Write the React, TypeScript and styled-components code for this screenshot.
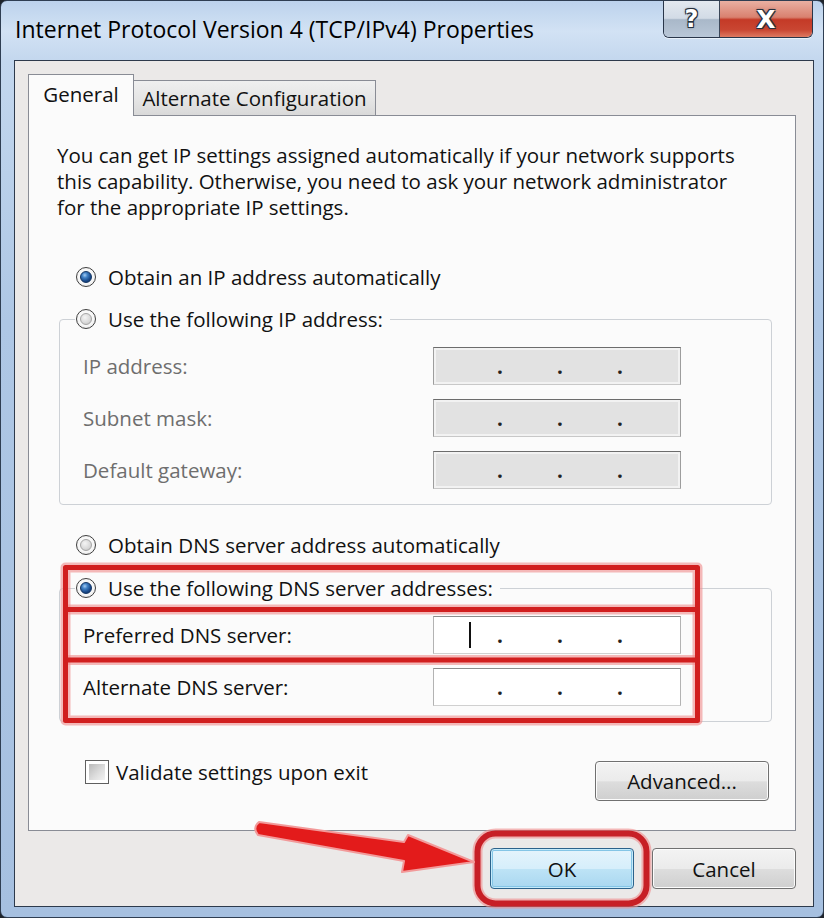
import React from "react";
import styled, { createGlobalStyle } from "styled-components";

const GlobalStyle = createGlobalStyle`
  html, body { margin: 0; padding: 0; background: #1e232a; }
  body { font-family: "Open Sans", "Noto Sans", sans-serif; }
  *, *::before, *::after { box-sizing: border-box; }
`;

const Window = styled.div`
  position: relative;
  width: 824px;
  height: 918px;
  border: 1px solid #2f3e52;
  border-radius: 7px;
  background: linear-gradient(180deg, #bcd2ec 0px, #d2e2f4 30px, #c3d7ee 60px, #aec7e5 320px, #a6c0e0 100%);
  display: flex;
  flex-direction: column;
  overflow: hidden;
  font-family: "Open Sans", "Noto Sans", sans-serif;
  color: #111;
`;

const TitleBar = styled.div`
  height: 59px;
  flex: none;
  display: flex;
  align-items: flex-start;
  justify-content: space-between;
  padding: 0 10px 0 14px;
`;

const TitleText = styled.div`
  margin-top: 13px;
  font-size: 23px;
  line-height: 30px;
  color: #000;
  white-space: nowrap;
`;

const CaptionButtons = styled.div`
  display: flex;
  height: 37px;
  border: 1px solid #29364a;
  border-top: none;
  border-radius: 0 0 6px 6px;
  overflow: hidden;
  box-shadow: 0 1px 0 rgba(255, 255, 255, 0.55);
`;

const CaptionButton = styled.div<{ $kind: "help" | "close" }>`
  display: flex;
  align-items: center;
  justify-content: center;
  width: ${(p) => (p.$kind === "help" ? 55 : 93)}px;
  border-left: ${(p) => (p.$kind === "close" ? "1px solid #3a4658" : "none")};
  background: ${(p) =>
    p.$kind === "help"
      ? "linear-gradient(180deg, #e3e9f0 0%, #d2dbe6 48%, #a9b8c9 52%, #b9c7d7 100%)"
      : "linear-gradient(180deg, #e9b0a2 0%, #d9816f 45%, #c43a27 52%, #c94632 80%, #de7a62 100%)"};
  font-family: "DejaVu Sans", sans-serif;
  font-weight: 700;
  font-size: ${(p) => (p.$kind === "help" ? 24 : 25)}px;
  line-height: 1;
  color: #fff;
  text-shadow: 1px 1px 0 #26303d, -1px -1px 0 #26303d, 1px -1px 0 #26303d,
    -1px 1px 0 #26303d, 0 0 3px #26303d;
`;

const ClientArea = styled.div`
  flex: 1;
  margin: 0 9px 10px 13px;
  border: 1px solid #2d3a4c;
  background: #ebe9e8;
  display: flex;
  flex-direction: column;
  padding: 13px 17px 0 13px;
`;

const TabStrip = styled.div`
  display: flex;
  align-items: flex-end;
  height: 42px;
  margin-bottom: -1px;
  position: relative;
  z-index: 1;
`;

const Tab = styled.div<{ $active?: boolean }>`
  display: flex;
  align-items: center;
  justify-content: center;
  width: ${(p) => (p.$active ? 106 : 243)}px;
  height: ${(p) => (p.$active ? 42 : 36)}px;
  margin-left: ${(p) => (p.$active ? 0 : -1)}px;
  padding-bottom: ${(p) => (p.$active ? 4 : 0)}px;
  border: 1px solid #898c95;
  border-bottom: ${(p) => (p.$active ? "none" : "1px solid #898c95")};
  background: ${(p) =>
    p.$active ? "#fbfbfb" : "linear-gradient(180deg, #efefef 0%, #e6e6e6 50%, #d9d9d9 100%)"};
  font-size: 20.5px;
  line-height: 30px;
  color: #111;
  position: relative;
  z-index: ${(p) => (p.$active ? 2 : 1)};
`;

const TabPanel = styled.div`
  height: 716px;
  flex: none;
  border: 1px solid #898c95;
  background: #fbfbfb;
  display: flex;
  flex-direction: column;
`;

const Description = styled.p`
  margin: 26px 0 0 28px;
  font-size: 20.5px;
  line-height: 26px;
  color: #111;
  white-space: nowrap;
`;

const OptionRow = styled.label<{ $mt: number }>`
  display: flex;
  align-items: center;
  gap: 12px;
  height: 30px;
  margin: ${(p) => p.$mt}px 0 0 47px;
  font-size: 20.5px;
  line-height: 30px;
  color: #111;
`;

const RadioMark = styled.span<{ $checked?: boolean }>`
  position: relative;
  flex: none;
  width: 20px;
  height: 20px;
  border-radius: 50%;
  border: 1px solid #3f3f3f;
  background: radial-gradient(circle at 50% 45%, #ffffff 0%, #f6f6f6 60%, #d6d6d6 100%);
  &::after {
    content: "";
    position: absolute;
    inset: 3px;
    border-radius: 50%;
    border: 1px solid ${(p) => (p.$checked ? "#123463" : "#a5a5a5")};
    background: ${(p) =>
      p.$checked
        ? "radial-gradient(circle at 38% 32%, #a6ccf2 0%, #4282c6 28%, #1b4b8c 62%, #0b2853 100%)"
        : "radial-gradient(circle at 40% 35%, #f4f4f4 0%, #d8d8d8 60%, #bababa 100%)"};
  }
`;

const GroupBox = styled.fieldset<{ $mt: number }>`
  margin: ${(p) => p.$mt}px 0 0 30px;
  width: 713px;
  padding: 0;
  border: 1px solid #cdd1d6;
  border-radius: 4px;
  min-inline-size: 0;
`;

const GroupLegend = styled.legend`
  margin-left: 15px;
  padding: 0 7px 0 1px;
  display: flex;
  align-items: center;
  gap: 12px;
  height: 30px;
  font-size: 20.5px;
  line-height: 30px;
  color: #111;
`;

const FieldRows = styled.div`
  display: flex;
  flex-direction: column;
  gap: 14px;
  padding: 13px 0 15px 23px;
`;

const FieldRow = styled.div`
  display: flex;
  align-items: center;
  height: 38px;
`;

const FieldLabel = styled.span<{ $disabled?: boolean }>`
  width: 350px;
  flex: none;
  font-size: 20.5px;
  line-height: 38px;
  color: ${(p) => (p.$disabled ? "#6e6e6e" : "#111")};
`;

const IpField = styled.div<{ $disabled?: boolean }>`
  position: relative;
  display: flex;
  width: 248px;
  height: 38px;
  padding-left: 36px;
  border: 1px solid ${(p) => (p.$disabled ? "#9d9d9d" : "#b3b3b3")};
  border-top-color: ${(p) => (p.$disabled ? "#6c6c6c" : "#8c8c8c")};
  border-bottom-color: ${(p) => (p.$disabled ? "#c8c8c8" : "#d0d0d0")};
  background: ${(p) => (p.$disabled ? "#e2e2e2" : "#ffffff")};
  box-shadow: ${(p) => (p.$disabled ? "inset 0 0 0 2px #f2f2f2" : "none")};
`;

const IpDot = styled.span`
  width: 60px;
  text-align: center;
  font-size: 20.5px;
  font-weight: 700;
  line-height: 36px;
  color: #222;
`;

const Caret = styled.span`
  position: absolute;
  left: 35px;
  top: 5px;
  width: 2px;
  height: 26px;
  background: #111;
`;

const BottomRow = styled.div`
  display: flex;
  justify-content: space-between;
  align-items: flex-start;
  margin-top: 38px;
  padding: 0 26px 0 56px;
`;

const CheckLabel = styled.label`
  display: flex;
  align-items: center;
  gap: 7px;
  height: 24px;
  font-size: 20.5px;
  line-height: 24px;
  color: #111;
`;

const CheckBox = styled.span`
  flex: none;
  width: 24px;
  height: 24px;
  padding: 3px;
  border: 1px solid #5f5f5f;
  background: linear-gradient(135deg, #b9b9b9 0%, #dcdcdc 55%, #f3f3f3 100%) content-box, #ffffff;
`;

const PushButton = styled.button<{ $primary?: boolean; $w: number; $h: number; $mt?: number }>`
  width: ${(p) => p.$w}px;
  height: ${(p) => p.$h}px;
  margin-top: ${(p) => p.$mt ?? 0}px;
  padding: 0;
  border-radius: 4px;
  border: 1px solid ${(p) => (p.$primary ? "#2c628b" : "#707070")};
  background: ${(p) =>
    p.$primary
      ? "linear-gradient(180deg, #e5f4fc 0%, #d6eefb 50%, #bde3f6 52%, #a9d7f0 100%)"
      : "linear-gradient(180deg, #f3f3f3 0%, #ebebeb 50%, #dddddd 52%, #cfcfcf 100%)"};
  box-shadow: ${(p) =>
    p.$primary ? "inset 0 0 0 1px #c5ebfb, inset 0 0 0 2px #84c5e6" : "inset 0 0 0 1px #fcfcfc"};
  font-family: "Open Sans", "Noto Sans", sans-serif;
  font-size: 20.5px;
  color: #111;
`;

const DialogFooter = styled.div`
  display: flex;
  justify-content: flex-end;
  gap: 18px;
  padding-top: 17px;
`;

const Annotations = styled.svg`
  position: absolute;
  top: -1px;
  left: -1px;
  width: 824px;
  height: 918px;
  pointer-events: none;
`;

const ipSlots = [0, 1, 2];

function Dots() {
  return (
    <>
      {ipSlots.map((i) => (
        <IpDot key={i}>.</IpDot>
      ))}
    </>
  );
}

export default function App() {
  return (
    <>
      <GlobalStyle />
      <Window>
        <TitleBar>
          <TitleText>Internet Protocol Version 4 (TCP/IPv4) Properties</TitleText>
          <CaptionButtons>
            <CaptionButton $kind="help">?</CaptionButton>
            <CaptionButton $kind="close">X</CaptionButton>
          </CaptionButtons>
        </TitleBar>
        <ClientArea>
          <TabStrip>
            <Tab $active>General</Tab>
            <Tab>Alternate Configuration</Tab>
          </TabStrip>
          <TabPanel>
            <Description>
              You can get IP settings assigned automatically if your network supports
              <br />
              this capability. Otherwise, you need to ask your network administrator
              <br />
              for the appropriate IP settings.
            </Description>

            <OptionRow $mt={42}>
              <RadioMark $checked />
              <span>Obtain an IP address automatically</span>
            </OptionRow>

            <GroupBox $mt={12}>
              <GroupLegend>
                <RadioMark />
                <span>Use the following IP address:</span>
              </GroupLegend>
              <FieldRows>
                <FieldRow>
                  <FieldLabel $disabled>IP address:</FieldLabel>
                  <IpField $disabled>
                    <Dots />
                  </IpField>
                </FieldRow>
                <FieldRow>
                  <FieldLabel $disabled>Subnet mask:</FieldLabel>
                  <IpField $disabled>
                    <Dots />
                  </IpField>
                </FieldRow>
                <FieldRow>
                  <FieldLabel $disabled>Default gateway:</FieldLabel>
                  <IpField $disabled>
                    <Dots />
                  </IpField>
                </FieldRow>
              </FieldRows>
            </GroupBox>

            <OptionRow $mt={25}>
              <RadioMark />
              <span>Obtain DNS server address automatically</span>
            </OptionRow>

            <GroupBox $mt={13}>
              <GroupLegend>
                <RadioMark $checked />
                <span>Use the following DNS server addresses:</span>
              </GroupLegend>
              <FieldRows>
                <FieldRow>
                  <FieldLabel>Preferred DNS server:</FieldLabel>
                  <IpField>
                    <Caret />
                    <Dots />
                  </IpField>
                </FieldRow>
                <FieldRow>
                  <FieldLabel>Alternate DNS server:</FieldLabel>
                  <IpField>
                    <Dots />
                  </IpField>
                </FieldRow>
              </FieldRows>
            </GroupBox>

            <BottomRow>
              <CheckLabel>
                <CheckBox />
                <span>Validate settings upon exit</span>
              </CheckLabel>
              <PushButton $w={174} $h={40} $mt={1}>
                Advanced...
              </PushButton>
            </BottomRow>
          </TabPanel>
          <DialogFooter>
            <PushButton $primary $w={144} $h={41}>
              OK
            </PushButton>
            <PushButton $w={144} $h={41}>
              Cancel
            </PushButton>
          </DialogFooter>
        </ClientArea>

        <Annotations viewBox="0 0 824 918">
          <g fill="none" strokeLinejoin="round">
            <g stroke="#f08c8c" strokeOpacity="0.6" strokeWidth="10">
              <rect x="65.5" y="567.5" width="632" height="153" />
              <line x1="65.5" y1="609.5" x2="697.5" y2="609.5" />
              <line x1="65.5" y1="660" x2="697.5" y2="660" />
              <rect x="477.5" y="833.5" width="169" height="70" rx="18" />
            </g>
            <g stroke="#d11f1f" strokeWidth="5">
              <rect x="65.5" y="567.5" width="632" height="153" />
              <line x1="65.5" y1="609.5" x2="697.5" y2="609.5" />
              <line x1="65.5" y1="660" x2="697.5" y2="660" />
            </g>
            <rect x="477.5" y="833.5" width="169" height="70" rx="18" stroke="#c71f26" strokeWidth="6" />
          </g>
          <path
            d="M259 822 L404 842 L408 835 L474 862 L402 872 L404 861 L258 835 Q252 828 259 822 Z"
            fill="#e31b1b"
            stroke="#f29a9a"
            strokeWidth="2"
            strokeLinejoin="round"
          />
        </Annotations>
      </Window>
    </>
  );
}
